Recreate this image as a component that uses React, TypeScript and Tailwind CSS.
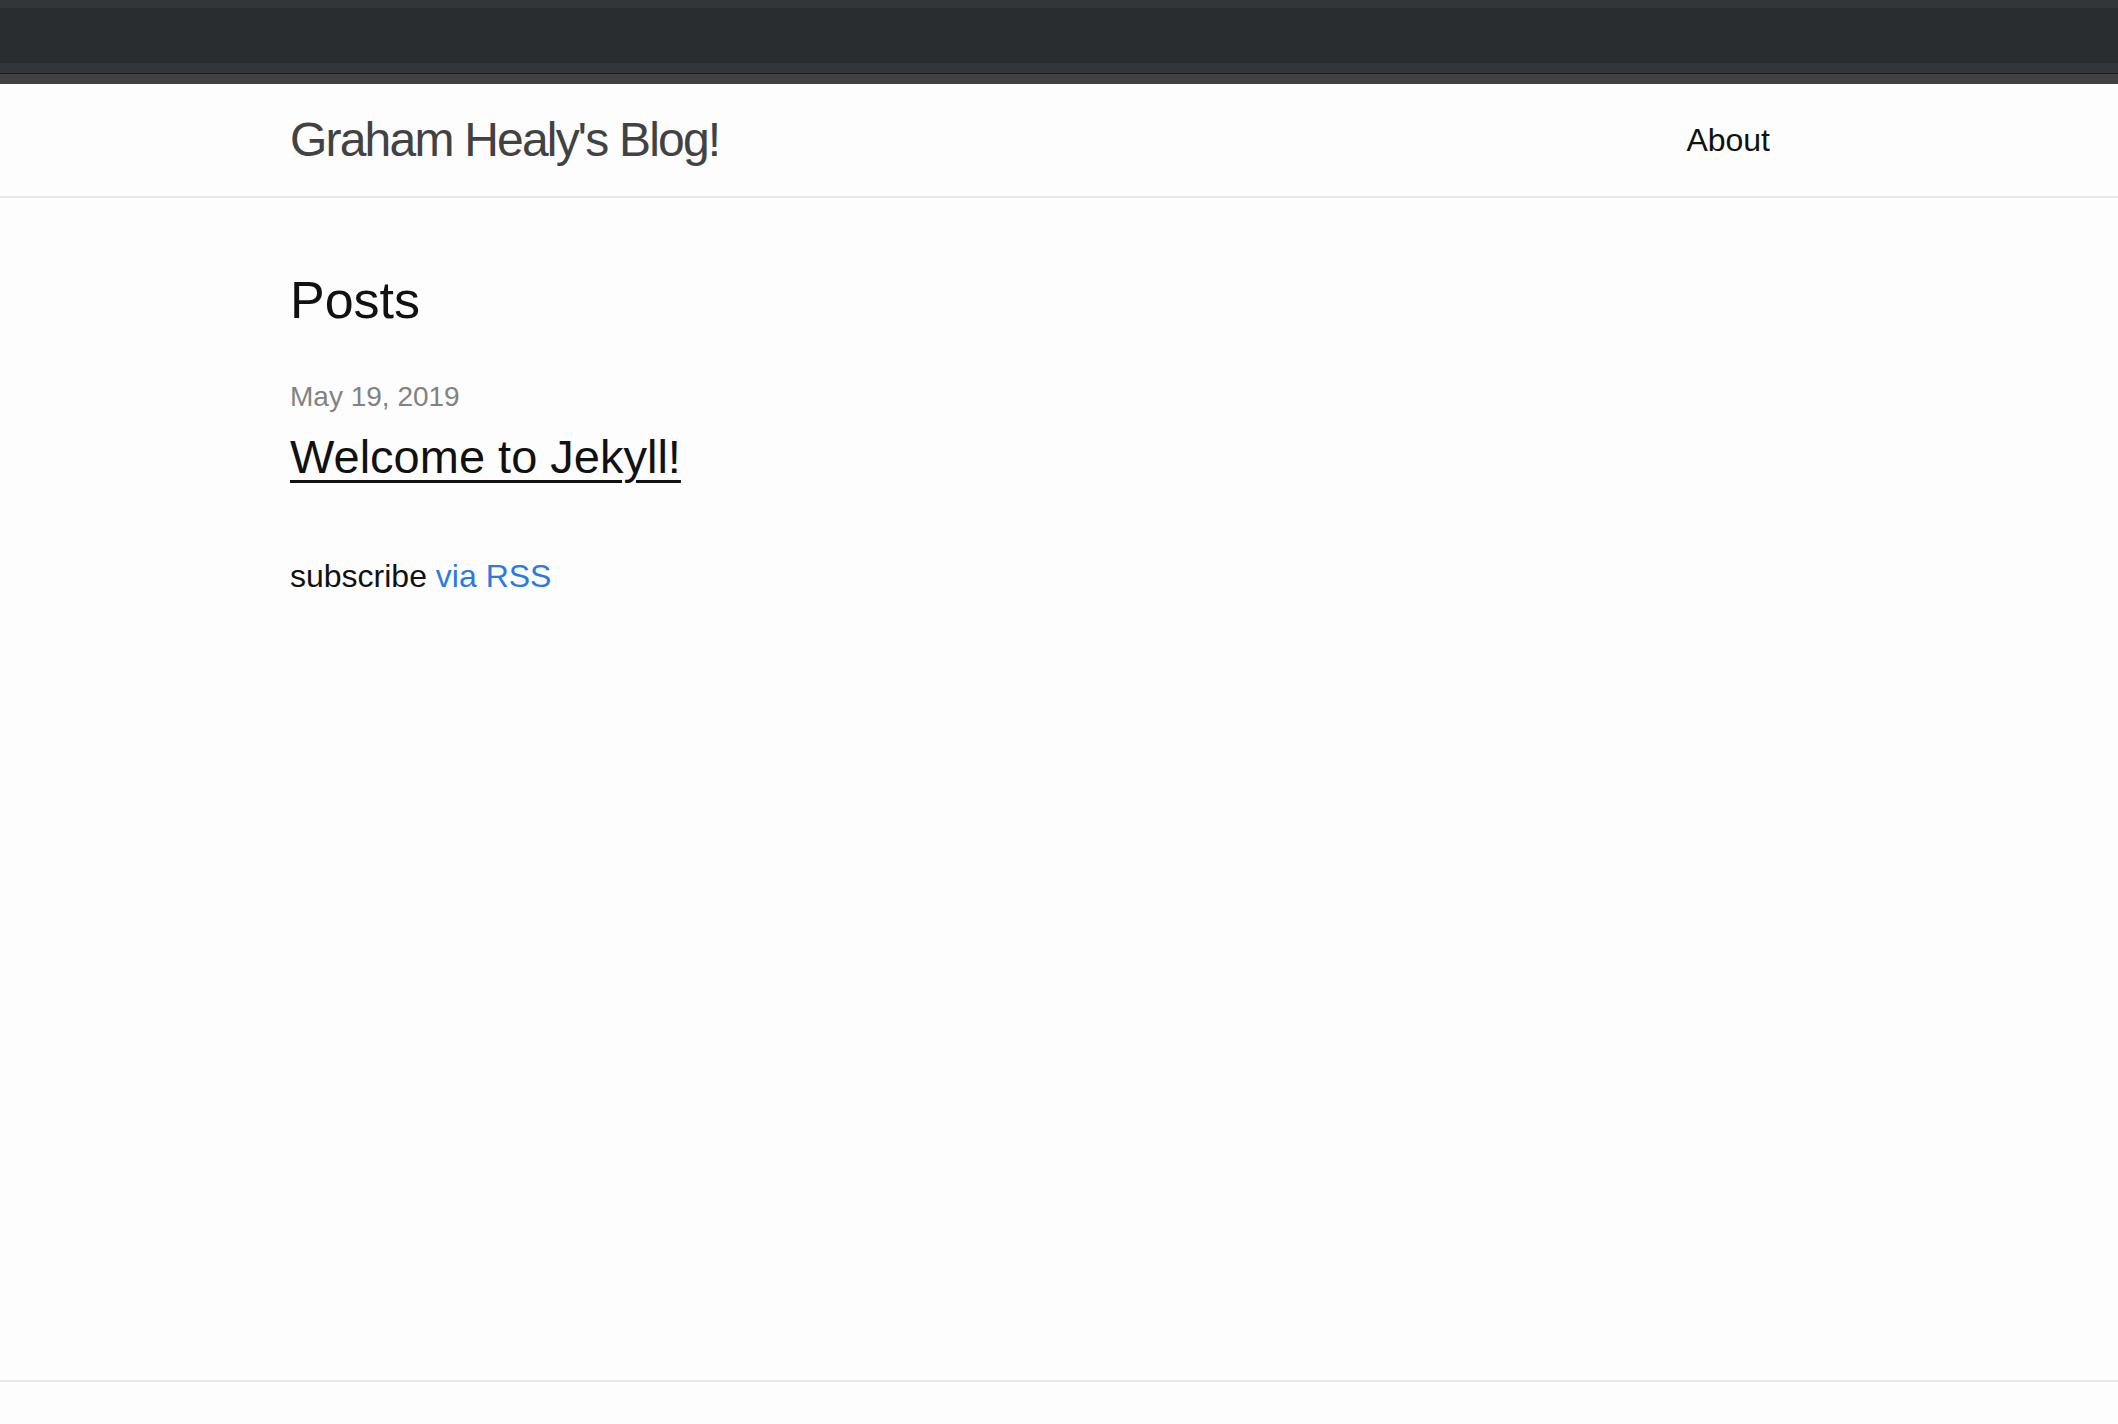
export default function App() {
  return (
    <div className="flex h-[1424px] flex-col bg-[#fdfdfd] text-[#111111] font-['Liberation_Sans',Arial,sans-serif]">
      {/* browser chrome strip */}
      <div className="flex h-[84px] flex-col">
        <div className="h-[8px] bg-[#32363a]" />
        <div className="h-[55px] bg-[#2a2d30]" />
        <div className="h-[10px] bg-[#32363a]" />
        <div className="h-[1px] bg-[#1c1c1c]" />
        <div className="h-[10px] bg-[#424242]" />
      </div>

      <header className="flex h-[114px] border-b-2 border-[#e8e8e8]">
        <div className="ml-[290px] flex w-[1480px] items-center justify-between">
          <a className="text-[48px] leading-none tracking-[-1.8px] text-[#424242]" href="#">
            Graham Healy's Blog!
          </a>
          <nav>
            <a className="block text-[32px] leading-none text-[#111111]" href="#">
              About
            </a>
          </nav>
        </div>
      </header>

      <main className="flex-1 pt-[76px]">
        <div className="ml-[290px] w-[1480px]">
          <h2 className="text-[52px] leading-none">Posts</h2>

          <ul className="mt-[57px]">
            <li>
              <span className="block text-[28px] leading-none text-[#828282]">May 19, 2019</span>
              <h3 className="mt-[22px] text-[47px] leading-none">
                <a className="underline decoration-[3px] underline-offset-[7px]" href="#">
                  Welcome to Jekyll!
                </a>
              </h3>
            </li>
          </ul>

          <p className="mt-[80px] text-[32px] leading-none">
            subscribe <a className="text-[#2a7ae2]" href="#">via RSS</a>
          </p>
        </div>
      </main>

      <footer className="h-[44px] border-t-2 border-[#e8e8e8]" />
    </div>
  )
}
